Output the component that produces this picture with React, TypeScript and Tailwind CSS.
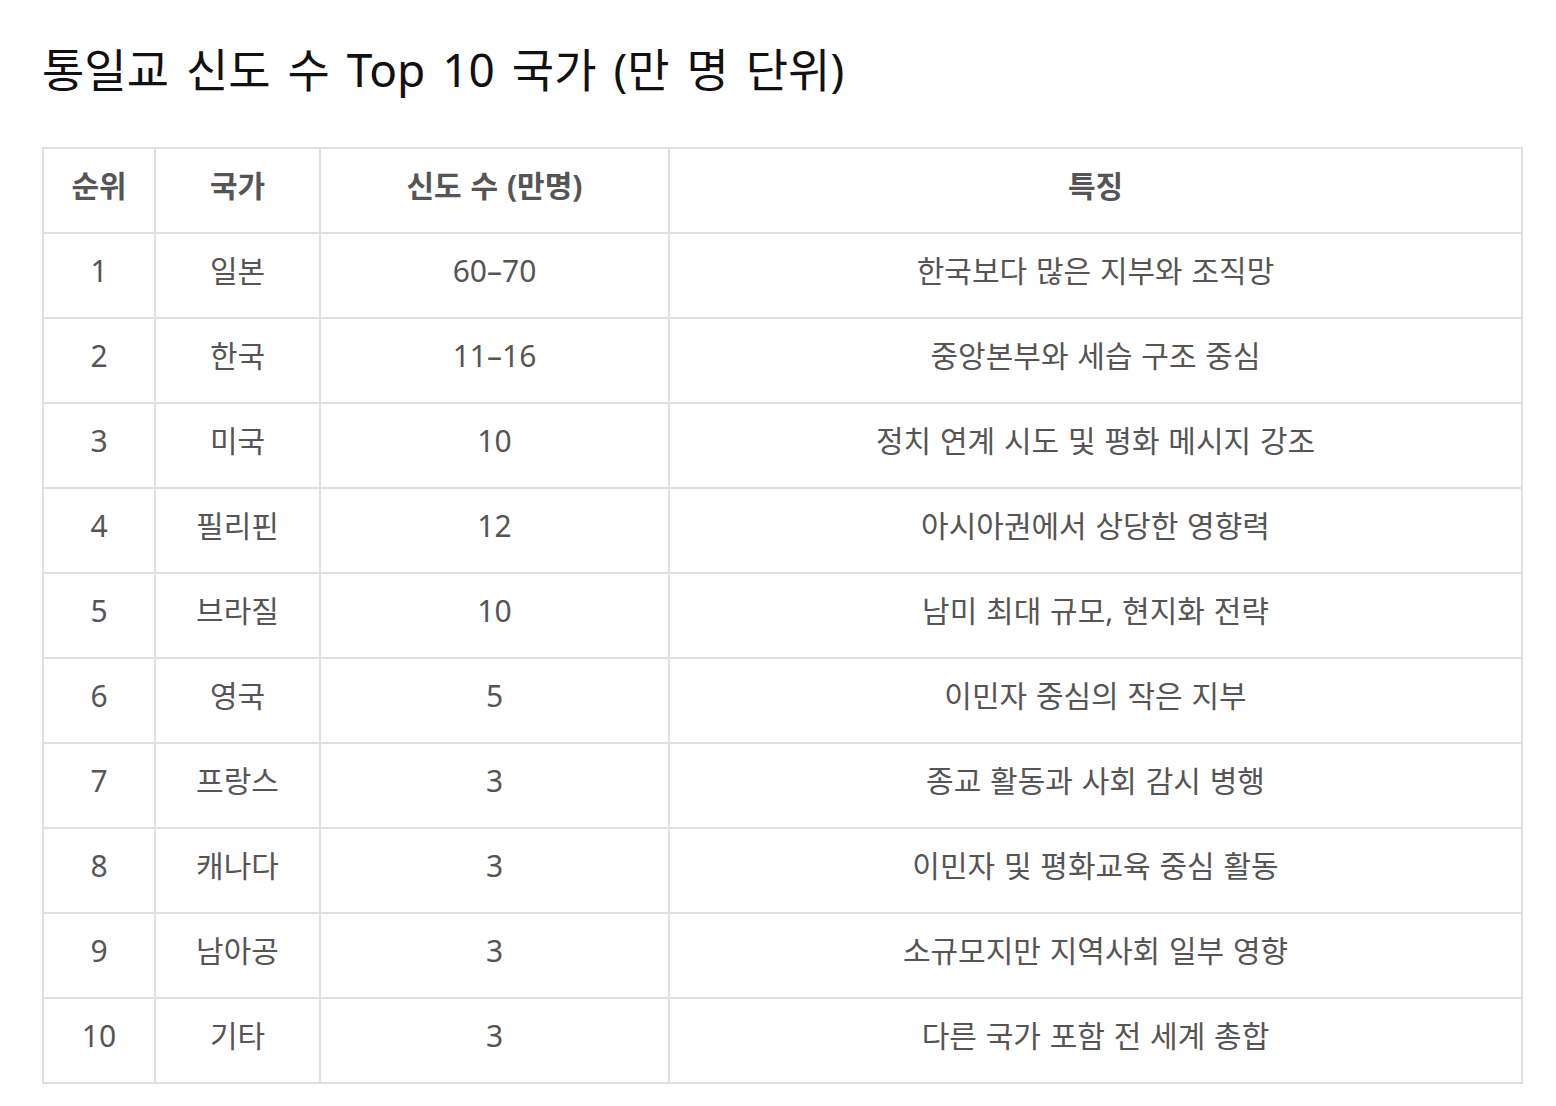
import React from "react";

const rows: [string, string, string, string][] = [
  ["1", "일본", "60–70", "한국보다 많은 지부와 조직망"],
  ["2", "한국", "11–16", "중앙본부와 세습 구조 중심"],
  ["3", "미국", "10", "정치 연계 시도 및 평화 메시지 강조"],
  ["4", "필리핀", "12", "아시아권에서 상당한 영향력"],
  ["5", "브라질", "10", "남미 최대 규모, 현지화 전략"],
  ["6", "영국", "5", "이민자 중심의 작은 지부"],
  ["7", "프랑스", "3", "종교 활동과 사회 감시 병행"],
  ["8", "캐나다", "3", "이민자 및 평화교육 중심 활동"],
  ["9", "남아공", "3", "소규모지만 지역사회 일부 영향"],
  ["10", "기타", "3", "다른 국가 포함 전 세계 총합"],
];

export default function App() {
  return (
    <div
      className="min-h-[1106px] w-[1556px] bg-white pl-[42px] pt-[38px]"
      style={{ fontFamily: '"Noto Sans", "Noto Sans CJK KR", sans-serif' }}
    >
      <h1 className="m-0 text-[46px] leading-[62px] font-normal text-[#111] [word-spacing:5px]">
        통일교 신도 수 Top 10 국가 (만 명 단위)
      </h1>
      <table className="mt-[47px] border-collapse border-2 border-[#e0e0e0] text-[30px] text-[#555] [word-spacing:1px]">
        <thead>
          <tr className="h-[85px]">
            <th className="w-[112px] border-2 border-[#e0e0e0] pb-[10px] font-bold">순위</th>
            <th className="w-[165px] border-2 border-[#e0e0e0] pb-[10px] font-bold">국가</th>
            <th className="w-[349px] border-2 border-[#e0e0e0] pb-[10px] font-bold">신도 수 (만명)</th>
            <th className="w-[853px] border-2 border-[#e0e0e0] pb-[10px] font-bold">특징</th>
          </tr>
        </thead>
        <tbody>
          {rows.map((r) => (
            <tr key={r[0]} className="h-[85px]">
              {r.map((c, i) => (
                <td key={i} className="border-2 border-[#e0e0e0] pb-[10px] text-center">
                  {c}
                </td>
              ))}
            </tr>
          ))}
        </tbody>
      </table>
    </div>
  );
}
